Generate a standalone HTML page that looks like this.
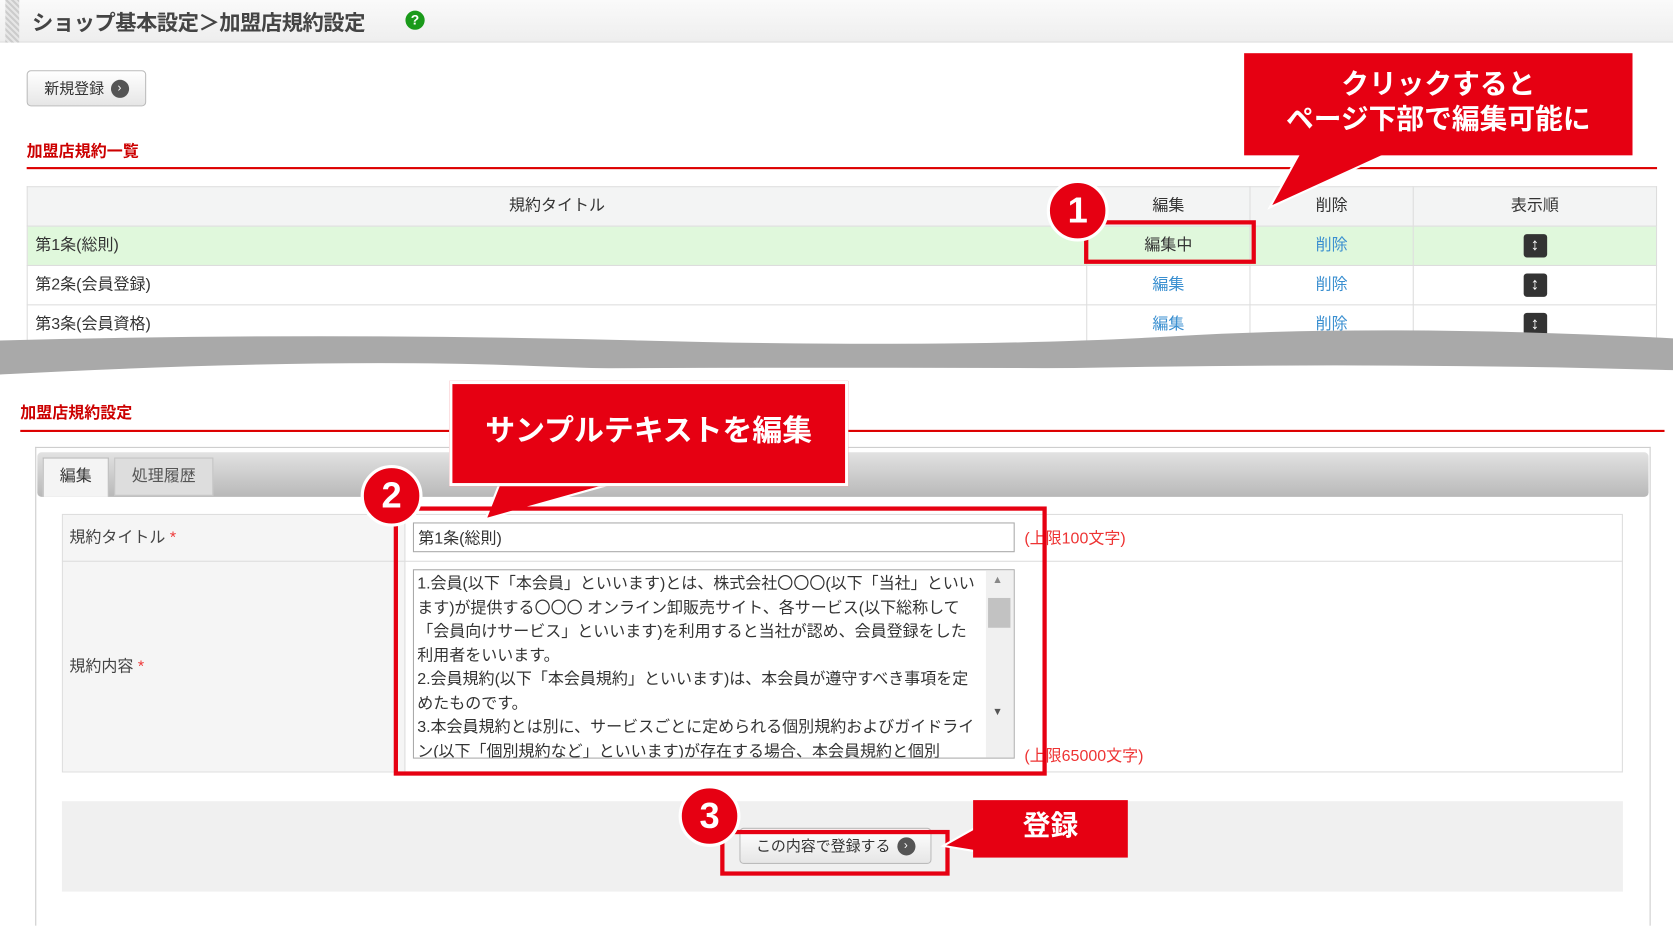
<!DOCTYPE html>
<html><head><meta charset="utf-8"><style>
*{margin:0;padding:0;box-sizing:border-box}
body{width:1673px;height:915px;overflow:hidden;background:#fff;font-family:"Liberation Sans","Noto Sans CJK JP",sans-serif;color:#333}
#w{position:absolute;left:0;top:0;width:1568px;height:860px;transform:scale(1.067,1.064);transform-origin:0 0}
.a{position:absolute}
.hdr{left:0;top:0;width:1568px;height:40px;background:linear-gradient(#fafafa,#eee);border-bottom:1px solid #ddd}
.strip{left:5px;top:0;width:13px;height:40px;background:repeating-linear-gradient(45deg,#ccc 0 2px,#e6e6e6 2px 4px)}
.title{left:30px;top:5px;font-size:20px;font-weight:bold;color:#444;letter-spacing:-0.5px}
.q{left:380px;top:10px;width:18px;height:18px;border-radius:50%;background:#1a9a1a;color:#fff;font-size:13px;font-weight:bold;text-align:center;line-height:18px}
.btn{border:1px solid #bbb;border-radius:4px;background:linear-gradient(#fff,#e6e6e6);font-size:14px;color:#333;display:flex;align-items:center;justify-content:center;gap:6px}
.arr{width:17px;height:17px;border-radius:50%;background:#555;color:#fff;font-size:11px;line-height:17px;text-align:center}
.sec{font-size:15px;font-weight:bold;color:#c00}
.rl{height:2px;background:#d00}
table{border-collapse:collapse;font-size:15px;table-layout:fixed}
td{border:1px solid #ddd;height:37px;line-height:18px;padding:0}
.ud{display:inline-block;width:22px;height:22px;background:#333;border-radius:3px;color:#fff;font-size:16px;line-height:22px;font-weight:bold;vertical-align:middle}
.lk{color:#3a8fd0}
.red{background:#e60012;color:#fff;font-weight:bold;text-align:center}
.circ{width:58px;height:58px;border-radius:50%;background:#e60012;border:3px solid #fff;color:#fff;font-size:34px;font-weight:bold;text-align:center;line-height:52px}
.ob{border:4px solid #e60012}
</style></head><body><div id="w">
<div class="a hdr"></div><div class="a strip"></div>
<div class="a title">ショップ基本設定＞加盟店規約設定</div><div class="a q">?</div>
<div class="a btn" style="left:25px;top:66px;width:112px;height:34px">新規登録<span class="arr">›</span></div>
<div class="a sec" style="left:25px;top:131px">加盟店規約一覧</div>
<div class="a rl" style="left:25px;top:157px;width:1528px"></div>
<table class="a" style="left:25px;top:175px;width:1528px">
<colgroup><col style="width:993px"><col style="width:153px"><col style="width:153px"><col></colgroup>
<tr style="background:#f3f4f4;text-align:center"><td style="height:32px">規約タイトル</td><td>編集</td><td>削除</td><td>表示順</td></tr>
<tr style="background:#e0f8dc"><td style="padding-left:7px">第1条(総則)</td><td style="text-align:center">編集中</td><td style="text-align:center" class="lk">削除</td><td style="text-align:center"><span class="ud">↕</span></td></tr>
<tr><td style="padding-left:7px">第2条(会員登録)</td><td style="text-align:center" class="lk">編集</td><td style="text-align:center" class="lk">削除</td><td style="text-align:center"><span class="ud">↕</span></td></tr>
<tr><td style="padding-left:7px">第3条(会員資格)</td><td style="text-align:center" class="lk">編集</td><td style="text-align:center" class="lk">削除</td><td style="text-align:center"><span class="ud">↕</span></td></tr>
</table>
<svg class="a" style="left:0;top:300px" width="1568" height="60"><path d="M0 22 Q300 14 600 22 T1100 18 T1568 20 L1568 60 L0 60Z" fill="#fff"/><path d="M0 20 Q300 12 600 20 T1100 16 T1568 18 L1568 48 Q1300 40 1000 46 T500 44 T0 52Z" fill="#a9a9a9"/></svg>
<div class="a" style="left:0;top:352px;width:1568px;height:510px;background:#fff"></div>
<svg class="a" style="left:0;top:340px" width="1568" height="20"><path d="M0 12 Q500 4 1000 6 T1568 8 L1568 20 L0 20Z" fill="#fff"/></svg>
<div class="a sec" style="left:19px;top:377px">加盟店規約設定</div>
<div class="a rl" style="left:19px;top:404px;width:1541px"></div>
<div class="a" style="left:33px;top:420px;width:1514px;height:450px;border:1px solid #ccc;border-bottom:none"></div>
<div class="a" style="left:35px;top:425px;width:1510px;height:42px;background:linear-gradient(#e2e2e2,#b8b8b8);border-radius:4px"></div>
<div class="a" style="left:40px;top:430px;width:62px;height:37px;background:#f4f4f4;border:1px solid #bbb;border-bottom:none;font-size:15px;text-align:center;line-height:34px">編集</div>
<div class="a" style="left:107px;top:430px;width:93px;height:36px;background:#ddd;border:1px solid #c4c4c4;font-size:15px;text-align:center;line-height:34px;color:#555">処理履歴</div>
<div class="a" style="left:58px;top:483px;width:1463px;height:243px;border:1px solid #ddd"></div>
<div class="a" style="left:59px;top:484px;width:321px;height:241px;background:#f5f5f5;border-right:1px solid #ddd"></div>
<div class="a" style="left:58px;top:527px;width:1463px;height:1px;background:#ddd"></div>
<div class="a" style="left:65px;top:494px;font-size:15px;color:#444">規約タイトル <span style="color:#e33">*</span></div>
<div class="a" style="left:65px;top:615px;font-size:15px;color:#444">規約内容 <span style="color:#e33">*</span></div>
<div class="a" style="left:387px;top:491px;width:564px;height:28px;border:1px solid #aaa;font-size:15px;padding:3px 4px">第1条(総則)</div>
<div class="a" style="left:960px;top:495px;font-size:15px;color:#e33">(上限100文字)</div>
<div class="a" style="left:960px;top:699px;font-size:15px;color:#e33">(上限65000文字)</div>
<div class="a" style="left:387px;top:535px;width:564px;height:178px;border:1px solid #aaa;overflow:hidden;font-size:15px;line-height:22.5px;padding:2px 32px 0 3px">1.会員(以下「本会員」といいます)とは、株式会社〇〇〇(以下「当社」といいます)が提供する〇〇〇 オンライン卸販売サイト、各サービス(以下総称して「会員向けサービス」といいます)を利用すると当社が認め、会員登録をした利用者をいいます。<br>2.会員規約(以下「本会員規約」といいます)は、本会員が遵守すべき事項を定めたものです。<br>3.本会員規約とは別に、サービスごとに定められる個別規約およびガイドライン(以下「個別規約など」といいます)が存在する場合、本会員規約と個別</div>
<div class="a" style="left:924px;top:536px;width:26px;height:176px;background:#f0f0f0"></div>
<div class="a" style="left:926px;top:562px;width:21px;height:28px;background:#c2c2c2"></div>
<div class="a" style="left:930px;top:540px;font-size:10px;color:#888">▲</div>
<div class="a" style="left:930px;top:664px;font-size:10px;color:#555">▼</div>
<div class="a" style="left:58px;top:753px;width:1463px;height:85px;background:#f0f0f0"></div>
<div class="a btn" style="left:693px;top:778px;width:180px;height:34px;font-size:14px">この内容で登録する<span class="arr">›</span></div>
<svg class="a" style="left:1160px;top:140px" width="160" height="60"><polygon points="60,0 150,0 30,55" fill="#e60012" stroke="#fff" stroke-width="2"/></svg>
<div class="a red" style="left:1166px;top:50px;width:364px;height:96px;font-size:26px;line-height:33px;padding-top:13px">クリックすると<br>ページ下部で編集可能に</div>
<div class="a ob" style="left:1016px;top:207px;width:161px;height:41px"></div>
<div class="a circ" style="left:981px;top:169px">1</div>
<svg class="a" style="left:440px;top:450px" width="160" height="40"><polygon points="30,0 150,0 15,38" fill="#e60012" stroke="#fff" stroke-width="2"/></svg>
<div class="a red" style="left:421px;top:358px;width:374px;height:99px;border:3px solid #fff;font-size:28px;line-height:88px">サンプルテキストを編集</div>
<div class="a ob" style="left:369px;top:476px;width:612px;height:253px"></div>
<div class="a circ" style="left:338px;top:437px">2</div>
<div class="a ob" style="left:675px;top:780px;width:215px;height:43px"></div>
<div class="a circ" style="left:636px;top:738px">3</div>
<svg class="a" style="left:880px;top:770px" width="40" height="40"><polygon points="34,8 4,25 34,30" fill="#e60012" stroke="#fff" stroke-width="2"/></svg>
<div class="a red" style="left:912px;top:752px;width:145px;height:54px;font-size:26px;line-height:48px">登録</div>
</div></body></html>
